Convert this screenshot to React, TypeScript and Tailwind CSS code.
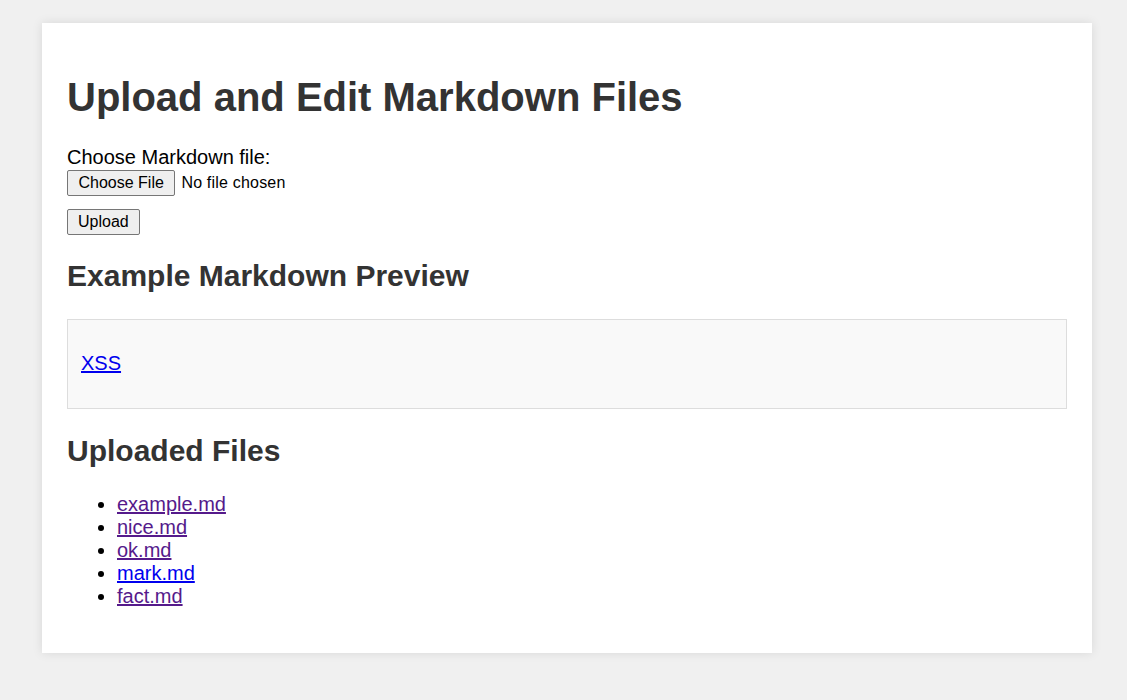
import React from "react";

const files = [
  { name: "example.md", visited: true },
  { name: "nice.md", visited: true },
  { name: "ok.md", visited: true },
  { name: "mark.md", visited: false },
  { name: "fact.md", visited: true },
];

const App: React.FC = () => {
  return (
    <div className="min-h-screen bg-[#f0f0f0] pt-[23px] pb-[47px] font-['Liberation_Sans',Arial,sans-serif] text-[20px] leading-[23px] text-black">
      <div className="ml-[42px] w-[1050px] bg-white px-[25px] pt-[25px] pb-[25px] shadow-[0_0_10px_rgba(0,0,0,0.1)]">
        <h1 className="mt-[26px] mb-[26px] text-[40px] font-bold leading-[46px] text-[#333]">
          Upload and Edit Markdown Files
        </h1>

        <form onSubmit={(e) => e.preventDefault()}>
          <label className="block">Choose Markdown file:</label>
          <div className="mt-px flex items-center gap-[6px] text-[16px] leading-[18px]">
            <button
              type="button"
              className="h-[26px] rounded-[2px] border border-[#767676] bg-[#efefef] px-[10.5px]"
            >
              Choose File
            </button>
            <span className="tracking-[0.2px]">No file chosen</span>
          </div>
          <button
            type="submit"
            className="mt-[13px] h-[26px] rounded-[2px] border border-[#767676] bg-[#efefef] px-[10px] text-[16px] leading-[18px]"
          >
            Upload
          </button>
        </form>

        <h2 className="mt-[24px] text-[30px] font-bold leading-[34px] text-[#333]">
          Example Markdown Preview
        </h2>
        <div className="mt-[26px] h-[90px] border border-[#ddd] bg-[#f9f9f9] pl-[13px] pt-[32px]">
          <p>
            <a href="#" className="text-[#0000ee] underline">
              XSS
            </a>
          </p>
        </div>

        <h2 className="mt-[25px] text-[30px] font-bold leading-[34px] text-[#333]">
          Uploaded Files
        </h2>
        <ul className="mt-[25px] mb-[20px] list-disc pl-[50px]">
          {files.map((f) => (
            <li key={f.name}>
              <a
                href="#"
                className={`underline ${f.visited ? "text-[#551a8b]" : "text-[#0000ee]"}`}
              >
                {f.name}
              </a>
            </li>
          ))}
        </ul>
      </div>
    </div>
  );
};

export default App;
